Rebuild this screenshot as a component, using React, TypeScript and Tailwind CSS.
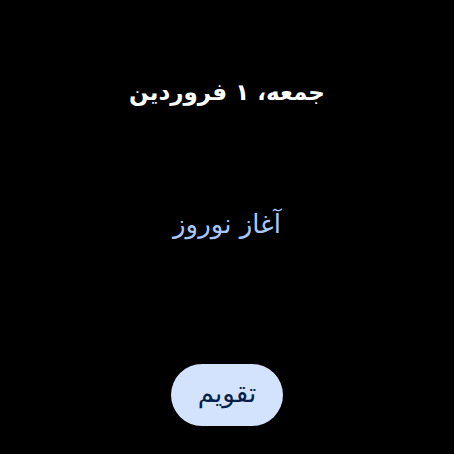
export default function App() {
    return (
        <div dir="rtl" className="w-[454px] h-[454px] bg-black flex flex-col items-center overflow-hidden" style={{ fontFamily: '"DejaVu Sans", sans-serif' }}>
            <h1 className="mt-[75px] text-[23px] font-bold text-white leading-[34px]">جمعه، ۱ فروردین</h1>
            <p className="mt-[97px] text-[26px] text-[#a8c7fa] leading-[36px]">آغاز نوروز</p>
            <button className="mt-[122px] w-[112px] h-[62px] rounded-full bg-[#d3e3fd] text-[#041e49] text-[26px] leading-[30px] pb-[4px] flex items-center justify-center">تقویم</button>
        </div>
    )
}
